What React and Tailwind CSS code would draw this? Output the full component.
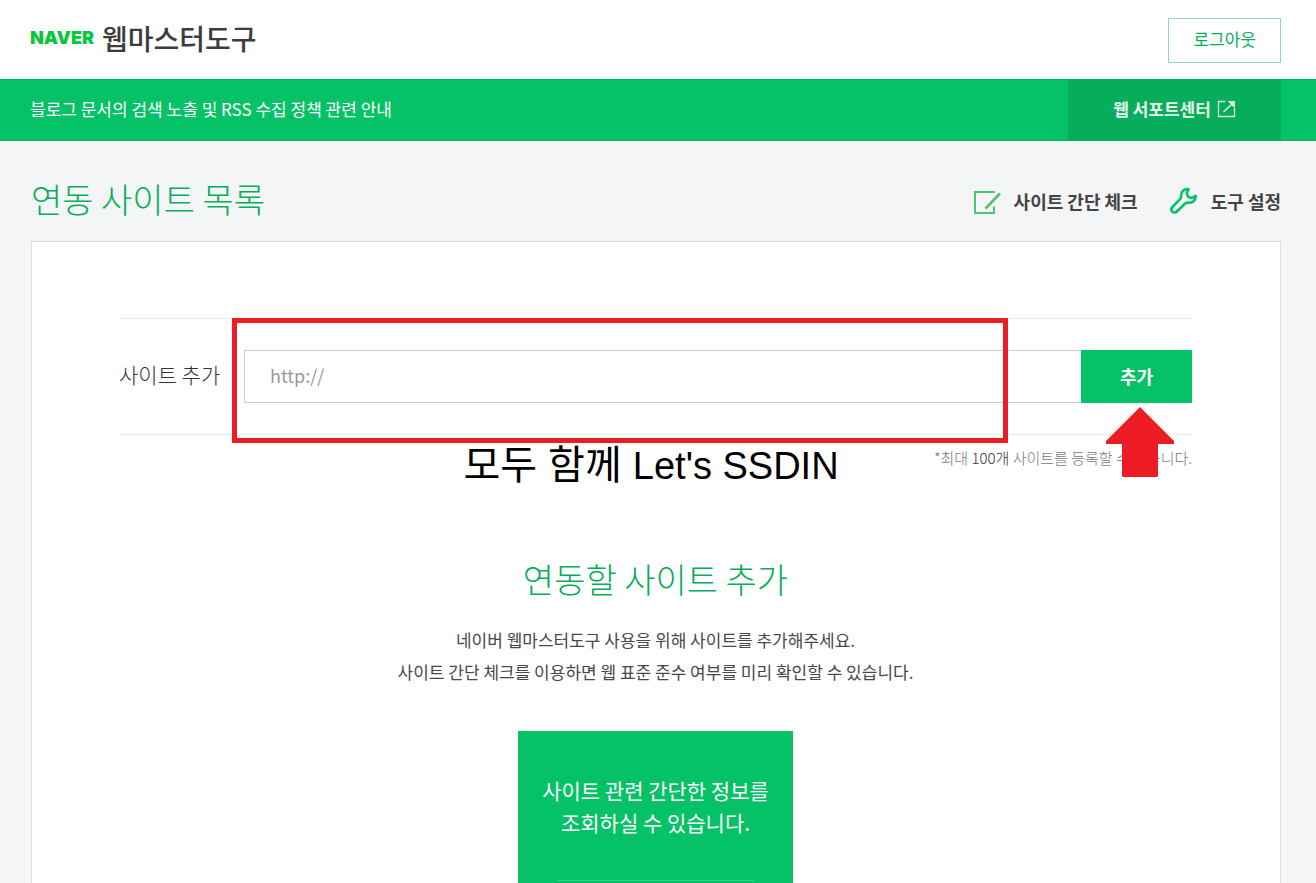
import { useState } from 'react';

const TOOL_LINKS = [
  { label: '사이트 간단 체크', href: '#check', icon: <CheckIcon /> },
  { label: '도구 설정', href: '#settings', icon: <WrenchIcon /> },
];

function CheckIcon() {
  return (
    <svg width="27" height="28" viewBox="0 0 27 28" fill="none" stroke="#4fc274" strokeWidth="2">
      <path d="M21 5H1v21h19v-6.500" />
      <path d="M11.500 21.500L26 6.500" strokeWidth="2.600" />
    </svg>
  );
}

function WrenchIcon() {
  return (
    <svg
      width="28"
      height="28"
      viewBox="0 0 28 28"
      fill="none"
      stroke="#06c267"
      strokeWidth="2.600"
      strokeLinejoin="round"
    >
      <path d="M18.500 2.200C14 1.800 10.500 4.800 11.100 9.500c.1 1.200-.2 1.900-1 2.700L2.400 20c-1.300 1.400-1.300 3.200-.1 4.500 1.300 1.300 3.300 1.300 4.600 0l8.200-8c.7-.7 1.400-.9 2.400-.8 5 .6 8.500-2.300 8.200-7L22 11l-4-1.200-1.200-3.600z" />
    </svg>
  );
}

function ExternalIcon() {
  return (
    <svg width="19" height="18" viewBox="0 0 19 18" fill="none" stroke="#d5f0e0">
      <path d="M8 1.500H1.500v15h16V8" strokeWidth="1.300" />
      <path d="M6.500 12L16 3" strokeWidth="1.600" />
      <path d="M11.500 1.500h6v6z" fill="#d5f0e0" strokeWidth="1" />
    </svg>
  );
}

function Header() {
  return (
    <header className="flex items-start justify-between bg-white pt-[18px] pr-[35px] pb-4 pl-[30px]">
      <a href="#home" className="flex h-10 items-center gap-2">
        <span className="font-['Inter',sans-serif] text-lg leading-none font-black text-[#03c83c]">NAVER</span>
        <span className="text-[28px] leading-none font-medium text-[#3c3c3c]">웹마스터도구</span>
      </a>
      <button
        type="button"
        className="h-[45px] border border-[#8edbb1] bg-white px-6 pb-1 text-[17px] text-[#08ad5b]"
      >
        로그아웃
      </button>
    </header>
  );
}

function NoticeBar() {
  return (
    <div className="flex h-[62px] items-stretch justify-between border-y border-[#08b35f] bg-[#06c267] pr-[35px] pl-[30px] text-[17px] text-white">
      <a href="#notice" className="self-center pb-0.5">
        블로그 문서의 검색 노출 및 RSS 수집 정책 관련 안내
      </a>
      <a href="#support" className="flex w-[213px] items-center justify-center gap-1.5 bg-[#08ad5b] pb-0.5 font-bold text-[#e6f7ed]">
        웹 서포트센터 <ExternalIcon />
      </a>
    </div>
  );
}

function AddSiteForm() {
  const [url, setUrl] = useState('');

  return (
    <div className="relative">
      <form
        onSubmit={(e) => e.preventDefault()}
        className="flex items-center border-y border-[#ebebeb] py-[31px]"
      >
        <label htmlFor="site-url" className="w-[125px] shrink-0 pb-1 text-[21px] leading-none font-light text-[#333]">
          사이트 추가
        </label>
        <input
          id="site-url"
          type="text"
          value={url}
          onChange={(e) => setUrl(e.target.value)}
          placeholder="http://"
          className="h-[53px] min-w-0 flex-1 border border-r-0 border-[#c9ced6] px-[25px] pb-1 text-lg text-[#333] outline-none placeholder:text-[#999]"
        />
        <button type="submit" className="h-[53px] w-[111px] bg-[#06c267] pb-0.5 text-lg font-bold text-white">
          추가
        </button>
      </form>
      <p className="pt-3 text-right text-[15px] leading-[22px] font-light text-[#777]">
        *최대 <span className="text-[#333]">100개</span> 사이트를 등록할 수 있습니다.
      </p>

      {/* annotations over the form */}
      <div className="pointer-events-none absolute top-0 right-[184px] left-[113px] h-[125px] border-[5px] border-[#ed1c24]" />
      <svg
        className="pointer-events-none absolute top-[89px] right-[18px]"
        width="68"
        height="70"
        viewBox="0 0 68 70"
        fill="#ed1c24"
      >
        <path d="M34 0L68 34v3H52v32l-1 1H17l-1-1V37H0v-3z" />
      </svg>
      <p className="pointer-events-none absolute inset-x-0 top-[123px] pr-[9px] text-center font-['Liberation_Sans','Noto_Sans_CJK_KR',sans-serif] text-[38px] leading-[48px] text-black">
        <span className="text-[40px]">모두 함께 </span>Let&apos;s SSDIN
      </p>
    </div>
  );
}

export default function App() {
  return (
    <div className="min-h-screen bg-[#f3f5f7] font-['Noto_Sans_CJK_KR',sans-serif] text-[#333]">
      <Header />
      <NoticeBar />

      <main className="pr-[35px] pl-[31px]">
        <div className="flex h-[100px] items-center justify-between pt-5">
          <h1 className="pb-1 text-[34px] leading-none font-light text-[#08ad5b]">연동 사이트 목록</h1>
          <nav className="flex gap-8">
            {TOOL_LINKS.map((link) => (
              <a key={link.href} href={link.href} className="flex items-center gap-[13px] text-lg leading-none font-bold text-[#444]">
                {link.icon}
                {link.label}
              </a>
            ))}
          </nav>
        </div>

        <section className="border border-b-0 border-[#d9dbdd] bg-white pt-[76px] pr-[88px] pl-[87px]">
          <AddSiteForm />

          <div className="flex flex-col items-center pt-[86px] text-center">
            <h2 className="text-[34px] leading-[48px] font-light text-[#08ad5b]">연동할 사이트 추가</h2>
            <p className="pt-[21px] text-[17px] leading-8 text-[#484848]">
              네이버 웹마스터도구 사용을 위해 사이트를 추가해주세요.
              <br />
              사이트 간단 체크를 이용하면 웹 표준 준수 여부를 미리 확인할 수 있습니다.
            </p>
            <a href="#check" className="mt-[43px] block w-[275px] bg-[#06c267] pt-[43px] pb-0.5 text-[21px] leading-8 text-white">
              사이트 관련 간단한 정보를
              <br />
              조회하실 수 있습니다.
              <span className="mx-[39px] mt-[42px] block border-t border-[#38ce85]" />
            </a>
          </div>
        </section>
      </main>
    </div>
  );
}
